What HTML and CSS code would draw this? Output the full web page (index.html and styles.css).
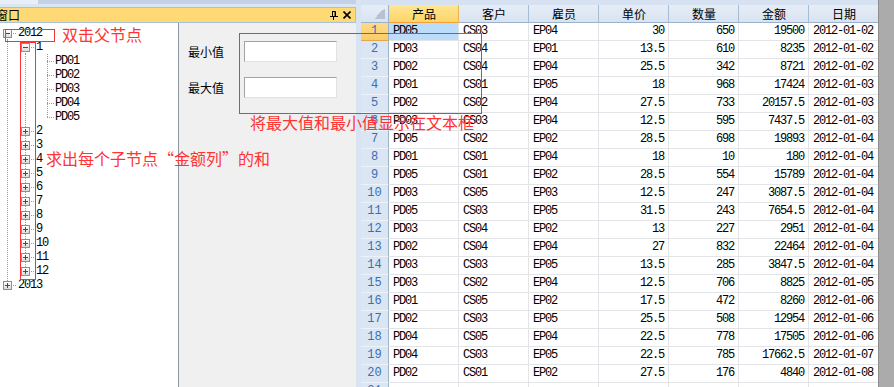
FILE: index.html
```html
<!DOCTYPE html>
<html lang="zh-CN">

<head>
    <meta charset="UTF-8">
    <meta name="viewport" content="width=device-width, initial-scale=1.0">
    <title>窗口</title>
    <link rel="stylesheet" href="styles.css">
</head>

<body>
    <div class="app">
        <section class="dock">
            <div class="dock-strip"></div>
            <div class="dock-title">
                <span class="dock-name">窗口</span>
                <span class="dock-btns">
                    <svg width="8" height="9" viewBox="0 0 8 9"><path d="M2 0.5h3.5v4.5M2.5 0.5v4.5M0 5.5h8M3.5 5.5v3.5M5 0.5v4.5" stroke="#000" fill="none" stroke-width="1"/></svg>
                    <svg width="8" height="8" viewBox="0 0 8 8"><path d="M0.5 0.5l7 7M7.5 0.5l-7 7" stroke="#000" stroke-width="1.6"/></svg>
                </span>
            </div>
            <div class="dock-body">
                <div class="tree">
                    <div class="node"><span class="joint first"><i class="box open"></i></span><span>2012</span></div>
                    <div class="node"><span class="guide"></span><span class="joint first"><i class="box open"></i></span><span>1</span></div>
                    <div class="node"><span class="guide"></span><span class="guide"></span><span class="leaf"></span><span>PD01</span></div>
                    <div class="node"><span class="guide"></span><span class="guide"></span><span class="leaf"></span><span>PD02</span></div>
                    <div class="node"><span class="guide"></span><span class="guide"></span><span class="leaf"></span><span>PD03</span></div>
                    <div class="node"><span class="guide"></span><span class="guide"></span><span class="leaf"></span><span>PD04</span></div>
                    <div class="node"><span class="guide"></span><span class="guide"></span><span class="leaf last"></span><span>PD05</span></div>
                    <div class="node"><span class="guide"></span><span class="joint"><i class="box"></i></span><span>2</span></div>
                    <div class="node"><span class="guide"></span><span class="joint"><i class="box"></i></span><span>3</span></div>
                    <div class="node"><span class="guide"></span><span class="joint"><i class="box"></i></span><span>4</span></div>
                    <div class="node"><span class="guide"></span><span class="joint"><i class="box"></i></span><span>5</span></div>
                    <div class="node"><span class="guide"></span><span class="joint"><i class="box"></i></span><span>6</span></div>
                    <div class="node"><span class="guide"></span><span class="joint"><i class="box"></i></span><span>7</span></div>
                    <div class="node"><span class="guide"></span><span class="joint"><i class="box"></i></span><span>8</span></div>
                    <div class="node"><span class="guide"></span><span class="joint"><i class="box"></i></span><span>9</span></div>
                    <div class="node"><span class="guide"></span><span class="joint"><i class="box"></i></span><span>10</span></div>
                    <div class="node"><span class="guide"></span><span class="joint"><i class="box"></i></span><span>11</span></div>
                    <div class="node"><span class="guide"></span><span class="joint last"><i class="box"></i></span><span>12</span></div>
                    <div class="node"><span class="joint last"><i class="box"></i></span><span>2013</span></div>
                </div>
                <div class="range">
                    <label>最小值</label><input class="txt-box" type="text">
                    <label>最大值</label><input class="txt-box" type="text">
                </div>
            </div>
        </section>

        <div class="splitter"></div>

        <section class="sheet">
            <table class="grid">
                <colgroup>
                    <col class="c-rh"><col class="c-70"><col class="c-70"><col class="c-70"><col class="c-70"><col class="c-70"><col class="c-70"><col class="c-69">
                </colgroup>
                <thead>
                    <tr><th class="corner"></th><th class="hsel">产品</th><th>客户</th><th>雇员</th><th>单价</th><th>数量</th><th>金额</th><th>日期</th></tr>
                </thead>
                <tbody>
                    <tr><td class="rh rsel">1</td><td class="sel">PD05</td><td>CS03</td><td>EP04</td><td class="num">30</td><td class="num">650</td><td class="num">19500</td><td>2012-01-02</td></tr>
                    <tr><td class="rh">2</td><td>PD03</td><td>CS04</td><td>EP01</td><td class="num">13.5</td><td class="num">610</td><td class="num">8235</td><td>2012-01-02</td></tr>
                    <tr><td class="rh">3</td><td>PD02</td><td>CS04</td><td>EP04</td><td class="num">25.5</td><td class="num">342</td><td class="num">8721</td><td>2012-01-02</td></tr>
                    <tr><td class="rh">4</td><td>PD01</td><td>CS01</td><td>EP05</td><td class="num">18</td><td class="num">968</td><td class="num">17424</td><td>2012-01-03</td></tr>
                    <tr><td class="rh">5</td><td>PD02</td><td>CS02</td><td>EP04</td><td class="num">27.5</td><td class="num">733</td><td class="num">20157.5</td><td>2012-01-03</td></tr>
                    <tr><td class="rh">6</td><td>PD03</td><td>CS03</td><td>EP04</td><td class="num">12.5</td><td class="num">595</td><td class="num">7437.5</td><td>2012-01-03</td></tr>
                    <tr><td class="rh">7</td><td>PD05</td><td>CS02</td><td>EP02</td><td class="num">28.5</td><td class="num">698</td><td class="num">19893</td><td>2012-01-04</td></tr>
                    <tr><td class="rh">8</td><td>PD01</td><td>CS01</td><td>EP04</td><td class="num">18</td><td class="num">10</td><td class="num">180</td><td>2012-01-04</td></tr>
                    <tr><td class="rh">9</td><td>PD05</td><td>CS01</td><td>EP02</td><td class="num">28.5</td><td class="num">554</td><td class="num">15789</td><td>2012-01-04</td></tr>
                    <tr><td class="rh">10</td><td>PD03</td><td>CS05</td><td>EP03</td><td class="num">12.5</td><td class="num">247</td><td class="num">3087.5</td><td>2012-01-04</td></tr>
                    <tr><td class="rh">11</td><td>PD05</td><td>CS03</td><td>EP05</td><td class="num">31.5</td><td class="num">243</td><td class="num">7654.5</td><td>2012-01-04</td></tr>
                    <tr><td class="rh">12</td><td>PD03</td><td>CS04</td><td>EP02</td><td class="num">13</td><td class="num">227</td><td class="num">2951</td><td>2012-01-04</td></tr>
                    <tr><td class="rh">13</td><td>PD02</td><td>CS04</td><td>EP04</td><td class="num">27</td><td class="num">832</td><td class="num">22464</td><td>2012-01-04</td></tr>
                    <tr><td class="rh">14</td><td>PD03</td><td>CS03</td><td>EP05</td><td class="num">13.5</td><td class="num">285</td><td class="num">3847.5</td><td>2012-01-04</td></tr>
                    <tr><td class="rh">15</td><td>PD03</td><td>CS02</td><td>EP04</td><td class="num">12.5</td><td class="num">706</td><td class="num">8825</td><td>2012-01-05</td></tr>
                    <tr><td class="rh">16</td><td>PD01</td><td>CS05</td><td>EP02</td><td class="num">17.5</td><td class="num">472</td><td class="num">8260</td><td>2012-01-06</td></tr>
                    <tr><td class="rh">17</td><td>PD02</td><td>CS03</td><td>EP05</td><td class="num">25.5</td><td class="num">508</td><td class="num">12954</td><td>2012-01-06</td></tr>
                    <tr><td class="rh">18</td><td>PD04</td><td>CS05</td><td>EP04</td><td class="num">22.5</td><td class="num">778</td><td class="num">17505</td><td>2012-01-06</td></tr>
                    <tr><td class="rh">19</td><td>PD04</td><td>CS03</td><td>EP05</td><td class="num">22.5</td><td class="num">785</td><td class="num">17662.5</td><td>2012-01-07</td></tr>
                    <tr><td class="rh">20</td><td>PD02</td><td>CS01</td><td>EP02</td><td class="num">27.5</td><td class="num">176</td><td class="num">4840</td><td>2012-01-08</td></tr>
                    <tr><td class="rh">21</td><td></td><td></td><td></td><td></td><td></td><td></td><td></td></tr>
                </tbody>
            </table>
        </section>

        <div class="sheet-empty"></div>
    </div>

    <!-- annotations drawn over the screenshot -->
    <div class="note-box note-year"></div>
    <div class="note-box note-months"></div>
    <div class="note-box note-range"></div>
    <div class="note note-dbl">双击父节点</div>
    <div class="note note-sum">求出每个子节点“金额列”的和</div>
    <div class="note note-show">将最大值和最小值显示在文本框</div>
</body>

</html>
```

FILE: styles.css
```css
html, body {
    margin: 0;
    height: 100%;
    overflow: hidden;
}

body {
    background-color: #dae5f3;
    font-family: "Liberation Mono", "Noto Sans CJK SC", monospace;
    font-size: 12px;
}

.app {
    display: flex;
    height: 387px;
}

/* left docked window */
.dock {
    width: 356px;
    flex: none;
    display: flex;
    flex-direction: column;
    background-color: #dbe6f4;
}

.dock-strip {
    height: 4px;
    background: linear-gradient(to right, #e9eff8 0 38px, #c2d1e6 38px);
}

.dock-title {
    margin-top: 3px;
    height: 16px;
    box-sizing: border-box;
    border: 1px solid #aabfda;
    border-left: 0;
    background-color: #ffda74;
    display: flex;
    align-items: center;
    justify-content: space-between;
    overflow: hidden;
}

.dock-name {
    margin-left: -4px;
    font-family: "Noto Sans CJK SC", sans-serif;
    line-height: 14px;
}

.dock-btns {
    display: flex;
    gap: 5px;
    align-items: center;
    margin-right: 4px;
}

.dock-btns svg {
    display: block;
}

.dock-body {
    flex: 1;
    display: flex;
}

.tree {
    width: 179px;
    box-sizing: border-box;
    border-right: 1px solid #8c97a6;
    background-color: #fff;
    padding-top: 3px;
    color: #000;
    letter-spacing: -1.2px;
}

.node {
    display: flex;
    align-items: flex-start;
    height: 14px;
    line-height: 14px;
    white-space: nowrap;
}

.guide {
    width: 18px;
    height: 14px;
    flex: none;
    background: repeating-linear-gradient(#9a9a9a 0 1px, transparent 1px 2px) 7px 0 / 1px 14px no-repeat;
}

.joint {
    --vy: 0px;
    --vh: 14px;
    width: 18px;
    height: 14px;
    flex: none;
    background:
        repeating-linear-gradient(to right, #9a9a9a 0 1px, transparent 1px 2px) 13px 7px / 4px 1px no-repeat,
        repeating-linear-gradient(#9a9a9a 0 1px, transparent 1px 2px) 7px var(--vy) / 1px var(--vh) no-repeat;
}

.joint.first {
    --vy: 7px;
    --vh: 7px;
}

.joint.last {
    --vh: 7px;
}

.leaf {
    width: 19px;
    height: 14px;
    flex: none;
    background:
        repeating-linear-gradient(to right, #9a9a9a 0 1px, transparent 1px 2px) 11px 7px / 7px 1px no-repeat,
        repeating-linear-gradient(#9a9a9a 0 1px, transparent 1px 2px) 11px 0 / 1px 14px no-repeat;
}

.leaf.last {
    background:
        repeating-linear-gradient(to right, #9a9a9a 0 1px, transparent 1px 2px) 11px 7px / 7px 1px no-repeat,
        repeating-linear-gradient(#9a9a9a 0 1px, transparent 1px 2px) 11px 0 / 1px 7px no-repeat;
}

.box {
    display: block;
    width: 9px;
    height: 9px;
    margin: 3px 0 0 3px;
    box-sizing: border-box;
    border: 1px solid #8f8f8f;
    background:
        linear-gradient(#2b4aa0, #2b4aa0) center / 5px 1px no-repeat,
        linear-gradient(#2b4aa0, #2b4aa0) center / 1px 5px no-repeat,
        linear-gradient(#fff, #dcdcdc);
}

.box.open {
    background:
        linear-gradient(#2b4aa0, #2b4aa0) center / 5px 1px no-repeat,
        linear-gradient(#fff, #dcdcdc);
}

.range {
    flex: 1;
    background-color: #f0f0f0;
    display: grid;
    grid-template-columns: 56px 93px;
    grid-auto-rows: 21px;
    row-gap: 15px;
    align-content: start;
    align-items: center;
    padding: 18px 0 0 9px;
}

.range label {
    font-family: "Noto Sans CJK SC", sans-serif;
    font-size: 12px;
    color: #000;
}

.txt-box {
    width: 93px;
    height: 21px;
    box-sizing: border-box;
    margin: 0;
    border: 1px solid;
    border-color: #a3a3a3 #e2e2e2 #e2e2e2 #a3a3a3;
    background-color: #fff;
    outline: 0;
}

.splitter {
    width: 5px;
    flex: none;
    background-color: #d9e4f2;
}

/* data sheet */
.sheet {
    width: 517px;
    flex: none;
    padding-top: 5px;
    background-color: #d6e2f2;
    overflow: hidden;
}

.sheet-empty {
    flex: 1;
    background-color: #ababab;
    border-left: 1px solid #8e8e8e;
}

.grid {
    border-collapse: separate;
    border-spacing: 0;
    table-layout: fixed;
    width: 517px;
    background-color: #fff;
    letter-spacing: -1.2px;
}

.c-rh { width: 28px; }
.c-70 { width: 70px; }
.c-69 { width: 69px; }

.grid th,
.grid td {
    box-sizing: border-box;
    height: 18px;
    padding: 0 3px 0 4px;
    line-height: 17px;
    border-right: 1px solid #e2e4e8;
    border-bottom: 1px solid #e2e4e8;
    white-space: nowrap;
    overflow: hidden;
    color: #000;
}

.grid th:last-child,
.grid td:last-child {
    border-right: 0;
}

.grid th {
    font-family: "Noto Sans CJK SC", sans-serif;
    font-weight: normal;
    letter-spacing: 0;
    background: linear-gradient(#e6edf7, #d8e3f1);
    border-right-color: #a6bbd4;
    border-bottom-color: #9cb2cc;
    text-align: center;
}

.grid th.corner {
    background:
        linear-gradient(to bottom right, transparent 50%, #b6c2d1 50%) right 3px bottom 3px / 11px 11px no-repeat,
        linear-gradient(#e6edf7, #d8e3f1);
    border-right-color: #9cb1ca;
}

.grid th.hsel {
    background: linear-gradient(#ffe595, #fdd568);
    border-right-color: #e9b558;
    border-bottom-color: #f0a238;
}

.grid td.rh {
    padding: 0;
    text-align: center;
    color: #3c6eae;
    letter-spacing: 0;
    background-color: #dbe6f4;
    border-right-color: #9cb1ca;
    border-bottom-color: #edf2f9;
}

.grid td.rsel {
    background: linear-gradient(#fddb8a, #f9cc6a);
    border-bottom-color: #e5a644;
}

.grid td.sel {
    background-color: #bcdcfb;
}

.grid td.num {
    text-align: right;
    padding-right: 4px;
}

/* red annotations */
.note-box {
    position: absolute;
    box-sizing: border-box;
    border: 1px solid #ff3030;
}

.note-year {
    left: 5px;
    top: 29px;
    width: 50px;
    height: 13px;
}

.note-months {
    left: 20px;
    top: 42px;
    width: 16px;
    height: 238px;
}

.note-range {
    left: 239px;
    top: 33px;
    width: 243px;
    height: 81px;
}

.note {
    position: absolute;
    font-family: "Noto Sans CJK SC", sans-serif;
    font-size: 16px;
    line-height: 16px;
    color: #ff3333;
    white-space: nowrap;
}

.note-dbl {
    left: 62px;
    top: 26px;
}

.note-sum {
    left: 46px;
    top: 150px;
}

.note-show {
    left: 250px;
    top: 114px;
}
```
